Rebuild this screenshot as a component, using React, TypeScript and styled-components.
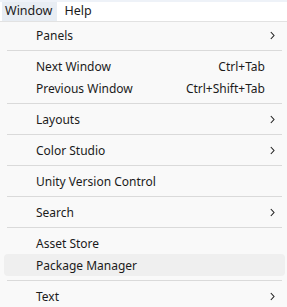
import React from "react";
import styled, { createGlobalStyle } from "styled-components";

const GlobalStyle = createGlobalStyle`
  html, body {
    margin: 0;
    padding: 0;
    background: #f9f9f9;
  }
  body {
    font-family: "Noto Sans", "Open Sans", sans-serif;
    font-size: 12px;
    color: #1b1b1b;
  }
`;

type Item =
  | { kind: "item"; label: string; shortcut?: string; submenu?: boolean; active?: boolean }
  | { kind: "sep" };

const items: Item[] = [
  { kind: "item", label: "Panels", submenu: true },
  { kind: "sep" },
  { kind: "item", label: "Next Window", shortcut: "Ctrl+Tab" },
  { kind: "item", label: "Previous Window", shortcut: "Ctrl+Shift+Tab" },
  { kind: "sep" },
  { kind: "item", label: "Layouts", submenu: true },
  { kind: "sep" },
  { kind: "item", label: "Color Studio", submenu: true },
  { kind: "sep" },
  { kind: "item", label: "Unity Version Control" },
  { kind: "sep" },
  { kind: "item", label: "Search", submenu: true },
  { kind: "sep" },
  { kind: "item", label: "Asset Store" },
  { kind: "item", label: "Package Manager", active: true },
  { kind: "sep" },
  { kind: "item", label: "Text", submenu: true },
];

const Chevron = () => (
  <svg width="5" height="9" viewBox="0 0 5 9">
    <polyline
      points="0.8,1 4,4.5 0.8,8"
      fill="none"
      stroke="#222"
      strokeWidth="1.1"
    />
  </svg>
);

export default function App() {
  return (
    <>
      <GlobalStyle />
      <Page>
        <TopStrip />
        <MenuBar>
          <BarItem open>Window</BarItem>
          <BarItem>Help</BarItem>
        </MenuBar>
        <Menu>
          {items.map((it, i) =>
            it.kind === "sep" ? (
              <Separator key={i} />
            ) : (
              <Row key={i} $active={it.active}>
                <Label>{it.label}</Label>
                {it.shortcut && <Shortcut>{it.shortcut}</Shortcut>}
                {it.submenu && (
                  <Arrow>
                    <Chevron />
                  </Arrow>
                )}
              </Row>
            )
          )}
        </Menu>
      </Page>
    </>
  );
}

const Page = styled.div`
  width: 287px;
  height: 307px;
  overflow: hidden;
  display: flex;
  flex-direction: column;
`;
const TopStrip = styled.div`
  height: 3px;
  background: #eef2f8;
`;
const MenuBar = styled.div`
  height: 19px;
  background: #ffffff;
  display: flex;
  align-items: stretch;
  padding-left: 2px;
  border-bottom: 1px solid #e2e2e2;
`;
const BarItem = styled.div<{ open?: boolean }>`
  display: flex;
  align-items: center;
  padding: 0 5px 2px 3px;
  margin-right: 4px;
  font-size: 12.5px;
  background: ${(p) => (p.open ? "#e8edf3" : "transparent")};
`;
const Menu = styled.div`
  flex: 1;
  background: #f9f9f9;
  padding: 2px 2px 0 4px;
`;
const Row = styled.div<{ $active?: boolean }>`
  height: 22px;
  display: flex;
  align-items: center;
  padding: 0 10px 0 32px;
  border-radius: 4px;
  background: ${(p) => (p.$active ? "#efefef" : "transparent")};
`;
const Label = styled.span`
  flex: 1;
  white-space: nowrap;
`;
const Shortcut = styled.span`
  padding-right: 10px;
  white-space: nowrap;
`;
const Arrow = styled.span`
  display: flex;
  align-items: center;
`;
const Separator = styled.div`
  height: 1px;
  margin: 4px 3px 4px 3px;
  background: #dadada;
`;
